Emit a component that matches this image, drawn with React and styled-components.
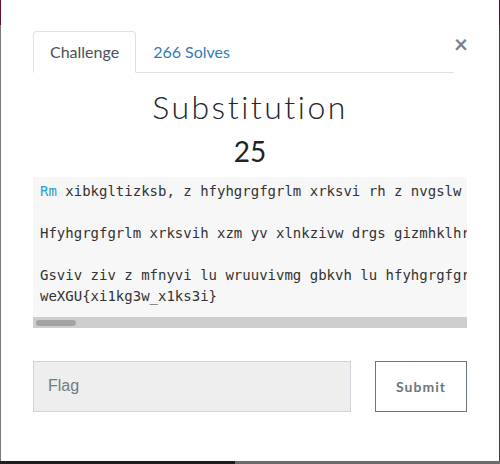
import React from 'react';
import styled, { createGlobalStyle } from 'styled-components';

const GlobalStyle = createGlobalStyle`
  html, body {
    margin: 0;
    padding: 0;
  }
  body {
    width: 500px;
    height: 464px;
    overflow: hidden;
    font-family: Lato, "Liberation Sans", sans-serif;
  }
  * {
    box-sizing: border-box;
  }
`;

const Screen = styled.div`
  width: 500px;
  height: 464px;
  display: flex;
  flex-direction: column;
  background: linear-gradient(to right, #1b1d20 235px, #6b6b6b 235px);
`;

const Frame = styled.div`
  height: 461px;
  display: flex;
  padding: 0 1px;
  background:
    linear-gradient(#64132f 25px, #7b7b7b 25px) left top / 1px 100% no-repeat,
    linear-gradient(#55102a 25px, #3e3e3e 25px) right top / 1px 100% no-repeat;
`;

const Modal = styled.div`
  flex: 1;
  min-width: 0;
  background: #fff;
  padding: 31px 32px 0;
  display: flex;
  flex-direction: column;
`;

const Header = styled.div`
  display: flex;
  align-items: flex-start;
`;

const Nav = styled.nav`
  flex: 1;
  display: flex;
  border-bottom: 1px solid #dee2e6;
`;

const Tab = styled.a`
  display: block;
  padding: 8px 16px;
  margin-bottom: -1px;
  border: 1px solid transparent;
  border-radius: 4px 4px 0 0;
  font-size: 16px;
  line-height: 24px;
  text-decoration: none;
  color: ${(p) => (p.$active ? '#495057' : '#337ab7')};
  ${(p) => p.$active && 'background: #fff; border-color: #dee2e6 #dee2e6 #fff;'}
`;

const Close = styled.button`
  width: 13px;
  padding: 0;
  margin-top: 1px;
  border: none;
  background: none;
  font-family: Lato, "Liberation Sans", sans-serif;
  font-size: 24px;
  font-weight: 700;
  line-height: 24px;
  color: #808080;
  text-align: center;
`;

const Title = styled.h1`
  margin: 15px 0 0;
  text-align: center;
  font-size: 32px;
  font-weight: 300;
  line-height: 1.2;
  letter-spacing: 2.5px;
  color: #212529;
`;

const Points = styled.h3`
  margin: 9px 0 0;
  text-align: center;
  font-size: 28px;
  font-weight: 400;
  line-height: 1.2;
  color: #212529;
`;

const CodeBlock = styled.div`
  margin-top: 8px;
  min-width: 0;
  overflow: hidden;
  background: #f7f7f7;
`;

const Pre = styled.pre`
  margin: 0;
  height: 140px;
  padding: 4px 7px 0;
  overflow: hidden;
  white-space: pre;
  font-family: "DejaVu Sans Mono", monospace;
  font-size: 14px;
  line-height: 21px;
  color: #333;
`;

const Keyword = styled.span`
  color: #2a9fcb;
`;

const ScrollTrack = styled.div`
  height: 11px;
  padding: 3px 0 0 3px;
  background: #cdcdcd;
`;

const ScrollThumb = styled.div`
  width: 40px;
  height: 6px;
  border-radius: 3px;
  background: #a3a3a3;
`;

const Form = styled.form`
  margin-top: 33px;
  display: flex;
  gap: 24px;
`;

const Input = styled.input`
  flex: 1;
  min-width: 0;
  height: 51px;
  padding: 0 14px;
  background: #eee;
  border: 1px solid #ced4da;
  font-family: "Liberation Sans", Arial, sans-serif;
  font-size: 16px;
  color: #495057;
  &::placeholder {
    color: #737b83;
  }
`;

const Button = styled.button`
  width: 92px;
  height: 51px;
  background: #fff;
  border: 1px solid #6c757d;
  font-family: Lato, "Liberation Sans", sans-serif;
  font-size: 14px;
  font-weight: 700;
  letter-spacing: 1px;
  color: #6c757d;
`;

const lines = [
  'xibkgltizksb, z hfyhgrgfgrlm xrksvi rh z nvgslw lu vmxibkgrmt rm dsrxs fmrgh lu kozrmgvcg ziv ivkozxvw drgs gsv xrksvigvcg, rm z wvurmvw nzmmvi, drgs gsv svok lu z pvb.',
  '',
  'Hfyhgrgfgrlm xrksvih xzm yv xlnkzivw drgs gizmhklhrgrlm xrksvih.',
  '',
  'Gsviv ziv z mfnyvi lu wruuvivmg gbkvh lu hfyhgrgfgrlm xrksvih.',
  'weXGU{xi1kg3w_x1ks3i}',
];

export default function App() {
  return (
    <>
      <GlobalStyle />
      <Screen>
        <Frame>
          <Modal>
            <Header>
              <Nav>
                <Tab $active>Challenge</Tab>
                <Tab>266 Solves</Tab>
              </Nav>
              <Close type="button">×</Close>
            </Header>
            <Title>Substitution</Title>
            <Points>25</Points>
            <CodeBlock>
              <Pre>
                <Keyword>Rm</Keyword> {lines.join('\n')}
              </Pre>
              <ScrollTrack>
                <ScrollThumb />
              </ScrollTrack>
            </CodeBlock>
            <Form onSubmit={(e) => e.preventDefault()}>
              <Input placeholder="Flag" />
              <Button type="submit">Submit</Button>
            </Form>
          </Modal>
        </Frame>
      </Screen>
    </>
  );
}
